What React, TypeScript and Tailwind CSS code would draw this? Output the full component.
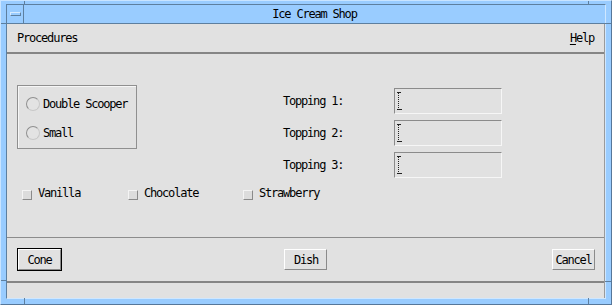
const font = "font-['DejaVu_Sans_Mono',monospace] text-[12px] tracking-[-1.2px] text-black";

function Notch({ className }: { className: string }) {
  return <div className={`absolute bg-[#5d7f9f] ${className}`} />;
}

function Radio({ label }: { label: string }) {
  return (
    <div className="flex h-[29px] items-center">
      <span className="h-[14px] w-[14px] rounded-full border border-t-[#8f8f8f] border-l-[#8f8f8f] border-b-[#c8c8c8] border-r-[#c8c8c8] bg-[#e3e3e3]" />
      <span className="ml-[3px]">{label}</span>
    </div>
  );
}

function Check({ label, width }: { label: string; width: string }) {
  return (
    <div className={`flex items-center gap-[6px] ${width}`}>
      <span className="mt-[3px] h-[10px] w-[10px] border border-t-[#f4f4f4] border-l-[#f4f4f4] border-b-[#8a8a8a] border-r-[#8a8a8a] bg-[#dcdcdc]" />
      <span>{label}</span>
    </div>
  );
}

function Topping({ n }: { n: number }) {
  return (
    <div className="flex h-[26px] items-center">
      <span className="w-[111px]">Topping {n}:</span>
      <div className="h-[26px] w-[108px] border border-t-[#8b8b8b] border-l-[#8b8b8b] border-b-[#f6f6f6] border-r-[#f6f6f6] pl-[2px] pt-[3px]">
        <svg width="5" height="18" viewBox="0 0 5 18">
          <rect x="0" y="0" width="4" height="1" fill="#222" />
          <line x1="1.5" y1="1" x2="1.5" y2="17" stroke="#222" strokeWidth="1" strokeDasharray="1 1" />
          <rect x="0" y="17" width="5" height="1" fill="#222" />
        </svg>
      </div>
    </div>
  );
}

function Button({ label, isDefault }: { label: string; isDefault?: boolean }) {
  const bevel = (
    <div className="flex h-[21px] w-[43px] items-center justify-center border border-t-white border-l-white border-b-[#8a8a8a] border-r-[#8a8a8a] bg-[#e1e1e1]">
      {label}
    </div>
  );
  if (isDefault) return <div className="border border-black">{bevel}</div>;
  return bevel;
}

export default function App() {
  return (
    <div className={`relative h-[305px] w-[612px] border border-t-[#c9e4ff] border-l-[#c9e4ff] border-b-[#56779a] border-r-[#56779a] bg-[#99ccff] px-[5px] pb-[5px] pt-[3px] ${font}`}>
      <Notch className="left-[23px] top-0 h-[4px] w-px" />
      <Notch className="left-0 top-[22px] h-px w-[6px]" />
      <Notch className="right-[22px] top-0 h-[4px] w-px" />
      <Notch className="right-0 top-[22px] h-px w-[6px]" />
      <Notch className="bottom-0 left-[23px] h-[6px] w-px" />
      <Notch className="left-0 top-[279px] h-px w-[6px]" />
      <Notch className="bottom-0 right-[22px] h-[6px] w-px" />
      <Notch className="right-0 top-[280px] h-px w-[6px]" />

      <div className="flex h-full flex-col border border-t-[#5d7f9f] border-l-[#5d7f9f] border-b-[#cfe7ff] border-r-[#cfe7ff]">
        <div className="flex h-[19px] shrink-0 border-b border-[#5d7f9f]">
          <div className="flex w-[17px] items-center border-r border-[#5d7f9f] pl-[3px]">
            <span className="h-[4px] w-[11px] border border-t-[#d6ebff] border-l-[#d6ebff] border-b-[#5d7f9f] border-r-[#5d7f9f]" />
          </div>
          <div className="flex flex-1 items-center justify-center">Ice Cream Shop</div>
        </div>

        <div className="flex flex-1 flex-col border-r border-[#9a9a9a] bg-[#e1e1e1]">
          <div className="flex h-[30px] items-center justify-between border-b-2 border-[#858585] pl-[10px] pr-[10px]">
            <span>Procedures</span>
            <span>
              <span className="underline underline-offset-2">H</span>elp
            </span>
          </div>

          <div className="h-[183px] pl-[10px] pt-[31px]">
            <div className="flex">
              <div className="h-[64px] w-[120px] border border-[#8f8f8f] pl-[8px] pt-[3px] shadow-[inset_1px_1px_0_#f6f6f6]">
                <Radio label="Double Scooper" />
                <Radio label="Small" />
              </div>
              <div className="ml-[146px] flex flex-col gap-[6px] pt-[3px]">
                <Topping n={1} />
                <Topping n={2} />
                <Topping n={3} />
              </div>
            </div>
            <div className="mt-[8px] flex h-[14px] items-center pl-[5px]">
              <Check label="Vanilla" width="w-[106px]" />
              <Check label="Chocolate" width="w-[115px]" />
              <Check label="Strawberry" width="w-[120px]" />
            </div>
          </div>

          <div className="grid h-[44px] grid-cols-3 items-center border-t border-[#8c8c8c] pl-[10px] pr-[9px]">
            <div className="justify-self-start">
              <Button label="Cone" isDefault />
            </div>
            <div className="justify-self-center">
              <Button label="Dish" />
            </div>
            <div className="justify-self-end">
              <Button label="Cancel" />
            </div>
          </div>

          <div className="flex-1 border-t-2 border-[#858585]" />
        </div>
      </div>
    </div>
  );
}
